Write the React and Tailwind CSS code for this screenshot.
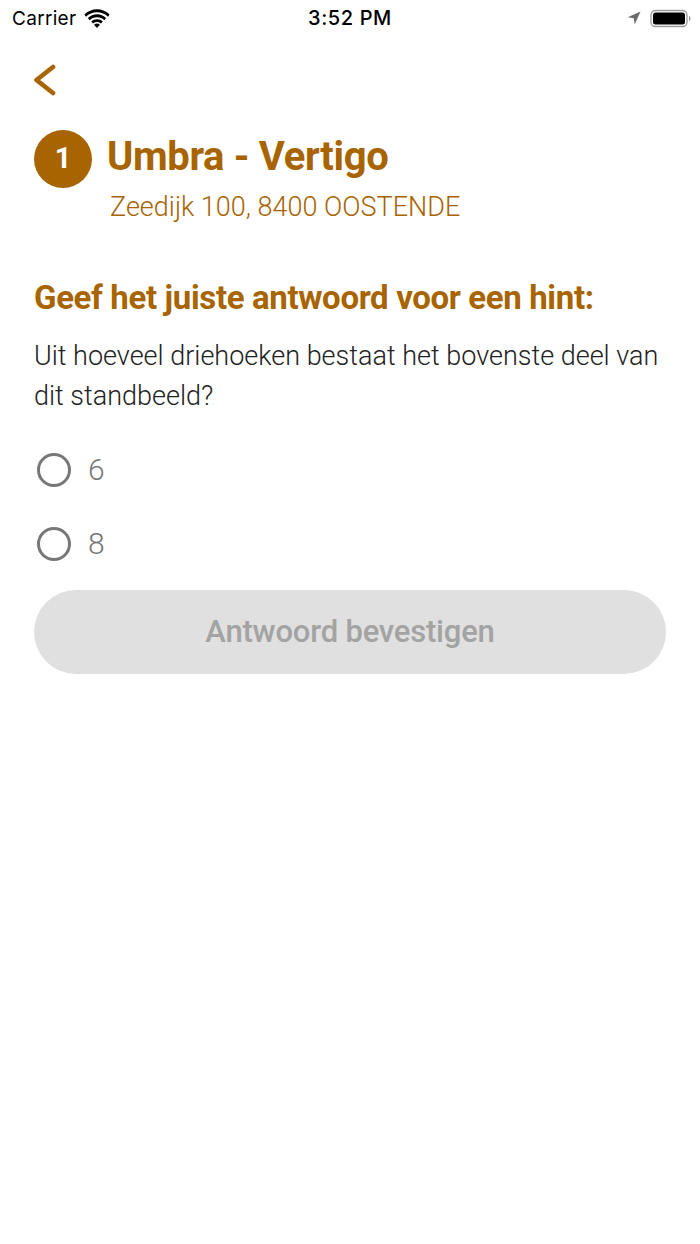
export default function App() {
  return (
    <div className="w-[700px] h-[1244px] bg-white flex flex-col font-['Roboto',sans-serif] overflow-hidden">
      {/* Status bar */}
      <div className="h-[36px] pl-3 pr-[8px] flex items-center justify-between relative">
        <div className="flex items-center gap-[8px]">
          <span className="text-[19px] tracking-[0.3px] leading-none font-['Inter',sans-serif] text-black">Carrier</span>
          <svg width="26" height="19" viewBox="0 0 26 19" fill="#000">
            <path d="M13 3.200c4.300 0 8.200 1.700 11 4.500l1.600-2.100C22.300 2.300 17.900.3 13 .3S3.700 2.300.4 5.600L2 7.700c2.800-2.800 6.700-4.500 11-4.500z" />
            <path d="M13 8.200c2.900 0 5.500 1.100 7.400 3l1.700-2.100C19.700 6.800 16.500 5.300 13 5.300S6.300 6.800 3.900 9.100l1.700 2.100c1.900-1.900 4.500-3 7.400-3z" />
            <path d="M13 13c1.600 0 3 .6 4 1.600l1.800-2.200C17.300 11 15.300 10.200 13 10.200S8.700 11 7.200 12.400L9 14.600c1-1 2.400-1.600 4-1.600z" />
            <path d="M13 14.500c-1.100 0-2.100.4-2.900 1.200l2.900 3.300 2.900-3.300c-.8-.8-1.800-1.200-2.900-1.200z" />
          </svg>
        </div>
        <span className="absolute left-0 right-0 text-center text-[20px] tracking-[0.6px] leading-none font-medium font-['Inter',sans-serif] text-black">3:52 PM</span>
        <div className="flex items-center gap-[9px]">
          <svg width="14" height="14" viewBox="0 0 14 14" fill="#6b6b6b">
            <path d="M13.500 .5 .8 6.300l6 .9.900 6.300z" />
          </svg>
          <svg width="42" height="19" viewBox="0 0 42 19">
            <rect x="1" y="1.500" width="36" height="16" rx="4.500" fill="none" stroke="#9a9a9a" strokeWidth="1.300" />
            <rect x="3" y="3.500" width="32" height="12" rx="2.500" fill="#000" />
            <path d="M39 7v5c1-.3 1.600-1.300 1.600-2.500S40 7.300 39 7z" fill="#9a9a9a" />
          </svg>
        </div>
      </div>

      <div className="px-[34px] flex flex-col">
        {/* Back */}
        <div className="mt-[27px] h-[34px] flex items-center">
          <svg width="22" height="32" viewBox="0 0 22 32" fill="none" stroke="#a86400" strokeWidth="4.600" strokeLinecap="round" strokeLinejoin="round">
            <path d="M19 3 2.500 16 19 29" />
          </svg>
        </div>

        {/* Heading */}
        <div className="mt-[33px] flex items-center gap-[15px] h-[58px]">
          <div className="w-[58px] h-[58px] rounded-full bg-[#a86400] text-white flex items-center justify-center text-[29px] font-bold shrink-0">1</div>
          <h1 className="text-[40px] leading-none font-bold text-[#a86400] tracking-[-0.35px] -mt-[4px]">Umbra - Vertigo</h1>
        </div>
        <p className="ml-[76px] mt-[1px] text-[27px] leading-[36px] text-[#a86400] font-light">Zeedijk 100, 8400 OOSTENDE</p>

        <h2 className="mt-[53px] text-[33px] leading-[40px] font-bold text-[#a86400] tracking-[-0.36px]">Geef het juiste antwoord voor een hint:</h2>
        <p className="mt-[18px] text-[27px] leading-[40px] font-light text-[#222]">Uit hoeveel driehoeken bestaat het bovenste deel van dit standbeeld?</p>

        {/* Options */}
        <div className="mt-[35px] flex flex-col gap-[36px]">
          {["6", "8"].map((o) => (
            <div key={o} className="h-[38px] flex items-center gap-[17px] pl-[3px]">
              <span className="w-[34px] h-[34px] rounded-full border-[3.500px] border-[#777] shrink-0" />
              <span className="text-[30px] leading-none font-light text-[#777]">{o}</span>
            </div>
          ))}
        </div>

        <button className="mt-[27px] h-[84px] w-full rounded-[42px] bg-[#e0e0e0] text-[31px] tracking-[-0.2px] font-medium text-[#a3a3a3] flex items-center justify-center">Antwoord bevestigen</button>
      </div>
    </div>
  );
}
